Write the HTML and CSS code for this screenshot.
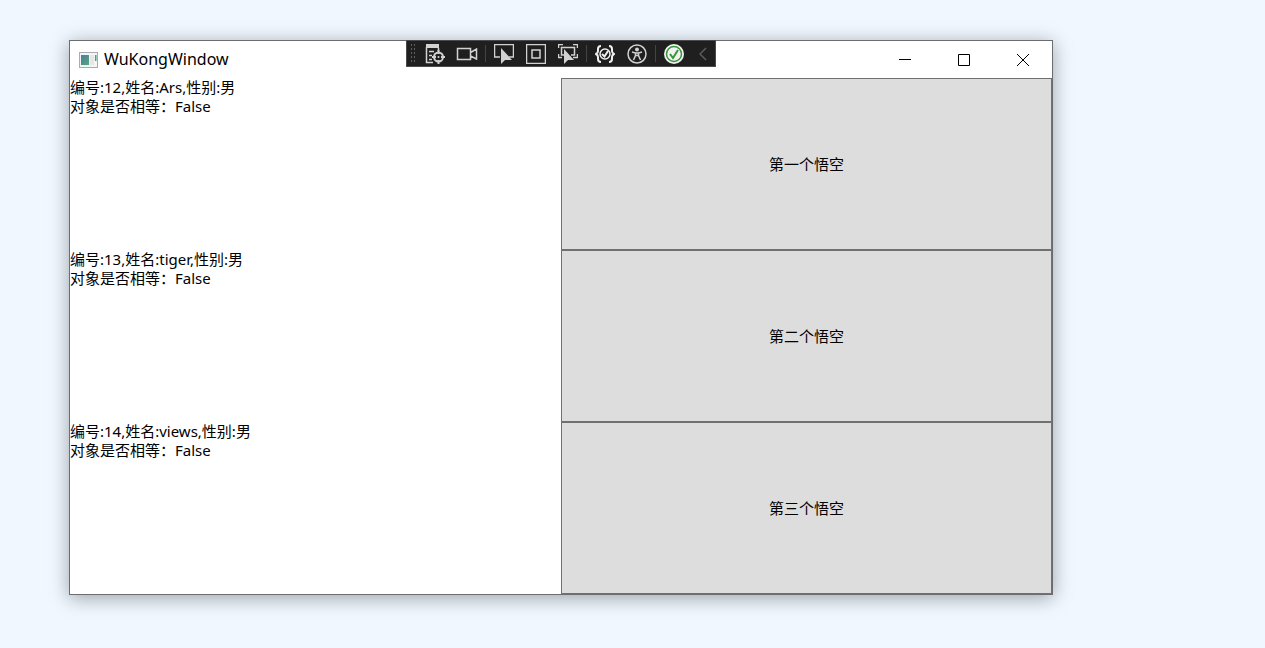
FILE: index.html
```html
<!DOCTYPE html>
<html lang="zh">
<head>
    <meta charset="utf-8">
    <title>WuKongWindow</title>
    <link rel="stylesheet" href="styles.css">
</head>
<body>
    <div class="window">
        <div class="titlebar">
            <svg class="app-icon" width="20" height="16" viewBox="0 0 20 16">
                <defs>
                    <linearGradient id="pane" x1="0" y1="0" x2="1" y2="1">
                        <stop offset="0" stop-color="#4a7da6"/>
                        <stop offset="1" stop-color="#55a877"/>
                    </linearGradient>
                </defs>
                <rect x="0.5" y="0.5" width="18" height="15" fill="#f4f4f4" stroke="#a9adb3"/>
                <rect x="2" y="3" width="8" height="10" fill="url(#pane)"/>
                <rect x="11" y="3" width="4" height="10" fill="#e6e6e6"/>
                <rect x="16" y="3" width="1.5" height="6" fill="#4f9c83"/>
            </svg>
            <h1 class="title">WuKongWindow</h1>
            <button class="win-btn" aria-label="minimize">
                <svg width="12" height="12" viewBox="0 0 12 12"><path d="M0 5.5H12"/></svg>
            </button>
            <button class="win-btn" aria-label="maximize">
                <svg width="12" height="12" viewBox="0 0 12 12"><path d="M.5 .5H11.5V11.5H.5Z"/></svg>
            </button>
            <button class="win-btn" aria-label="close">
                <svg width="12" height="12" viewBox="0 0 12 12"><path d="M0 0L12 12M12 0L0 12"/></svg>
            </button>
        </div>

        <!-- 调试工具栏 -->
        <div class="toolbar">
            <span class="grip"></span>
            <button class="tool" aria-label="live visual tree">
                <svg width="20" height="20" viewBox="0 0 20 20">
                    <path d="M1 0H14V4H1Z" fill="#d2d2d2" stroke="none"/>
                    <path d="M1.5 3V18.500H8M4 7.500H9M4 11.500H7M4 15.500H7M13.500 4V7" stroke-width="1.5"/>
                    <circle cx="13.5" cy="13" r="4.5" stroke-width="2"/>
                    <path d="M13.500 6V10M13.500 16V20M7 13H11M16 13H20" stroke-width="2"/>
                    <circle cx="13.5" cy="13" r="1" fill="#d2d2d2" stroke="none"/>
                </svg>
            </button>
            <button class="tool" aria-label="record">
                <svg width="22" height="20" viewBox="0 0 22 20">
                    <path d="M1.5 4.500H14.500V15.500H1.500ZM14.500 8.500L20.500 5V15L14.500 12" stroke-width="1.5"/>
                </svg>
            </button>
            <span class="sep"></span>
            <button class="tool" aria-label="select element">
                <svg width="20" height="20" viewBox="0 0 20 20">
                    <path d="M6 13H.5V.5H19.5V13H15" stroke-width="1.5"/>
                    <path d="M7 4V20L11 16H18Z" fill="#d2d2d2" stroke="none"/>
                </svg>
            </button>
            <button class="tool" aria-label="layout adorners">
                <svg width="20" height="20" viewBox="0 0 20 20">
                    <path d="M.5 .5H19.5V19.5H.5ZM6 6H14V14H6Z" stroke-width="1.5"/>
                </svg>
            </button>
            <button class="tool" aria-label="track focus">
                <svg width="20" height="20" viewBox="0 0 20 20">
                    <path d="M.5 4V.5H5M15 .5H19.500V4M.5 10V13.500H4M19.500 10V13.500H15" stroke-width="1.5"/>
                    <path d="M6 11H3.500V3.500H16.500V11H13" stroke-width="1.5"/>
                    <path d="M6 5V20L10 16H16Z" fill="#d2d2d2" stroke="none"/>
                </svg>
            </button>
            <span class="sep"></span>
            <button class="tool" aria-label="binding failures">
                <svg class="bright" width="20" height="20" viewBox="0 0 20 20">
                    <path d="M6 2Q3 2 3 5V7Q3 9 1 10Q3 11 3 13V15Q3 18 6 18M14 2Q17 2 17 5V7Q17 9 19 10Q17 11 17 13V15Q17 18 14 18" stroke-width="2"/>
                    <circle cx="10" cy="10" r="5" stroke-width="1.5"/>
                    <path d="M7 10L9.500 12.500L13 7" stroke-width="2"/>
                </svg>
            </button>
            <button class="tool" aria-label="accessibility">
                <svg width="20" height="20" viewBox="0 0 20 20">
                    <circle cx="10" cy="10" r="9" stroke-width="1.5"/>
                    <circle cx="10" cy="5.5" r="2" fill="#d2d2d2" stroke="none"/>
                    <path d="M5 8L8.500 9V11.500L6.500 16M15 8L11.500 9V11.500L13.500 16M8.500 9H11.500M8.500 11.500H11.500" stroke-width="1.5"/>
                </svg>
            </button>
            <span class="sep"></span>
            <button class="tool" aria-label="hot reload">
                <svg width="20" height="20" viewBox="0 0 20 20">
                    <circle cx="10" cy="10" r="10" fill="#f2f2f2" stroke="none"/>
                    <circle cx="10" cy="10" r="7.5" stroke="#389638" stroke-width="1.5"/>
                    <path d="M6 10L9 14L14 6" stroke="#389638" stroke-width="2"/>
                </svg>
            </button>
            <button class="tool collapse" aria-label="collapse">
                <svg width="8" height="14" viewBox="0 0 8 14"><path d="M7 1L1 7L7 13" stroke="#5c5c5c" stroke-width="1.5"/></svg>
            </button>
        </div>

        <div class="content">
            <p class="info">编号:12,姓名:Ars,性别:男<br>对象是否相等：False</p>
            <button class="wukong">第一个悟空</button>
            <p class="info">编号:13,姓名:tiger,性别:男<br>对象是否相等：False</p>
            <button class="wukong">第二个悟空</button>
            <p class="info">编号:14,姓名:views,性别:男<br>对象是否相等：False</p>
            <button class="wukong">第三个悟空</button>
        </div>
    </div>
</body>
</html>
```
FILE: styles.css
```css
* {
    box-sizing: border-box;
}
body {
    display: flex;
    min-height: 100vh;
    margin: 0;
    padding: 40px 212px 53px 69px;
    background-color: #f0f7ff;
    color: #000000;
    font-family: "Noto Sans", "Noto Sans CJK SC", sans-serif;
    font-size: 15px;
    line-height: 19px;
}
button {
    padding: 0;
    border: 0;
    background: none;
    color: inherit;
    font: inherit;
}
svg {
    fill: none;
}
.window {
    position: relative;
    display: flex;
    flex: 1;
    flex-direction: column;
    border: 1px solid #6b6d70;
    background-color: #ffffff;
    box-shadow: 0 3px 18px rgba(0, 0, 0, 0.35);
}
.titlebar {
    display: flex;
    align-items: center;
    height: 37px;
    padding-left: 9px;
}
.title {
    flex: 1;
    margin: 0 0 0 5px;
    font-size: 16px;
    font-weight: normal;
}
.win-btn {
    display: flex;
    align-items: center;
    justify-content: center;
    width: 59px;
    height: 36px;
    stroke: #000000;
}

/* 工具栏浮在标题栏上面 */
.toolbar {
    position: absolute;
    top: -1px;
    right: 0;
    left: 0;
    display: flex;
    align-items: center;
    width: 310px;
    height: 27px;
    margin: 0 auto;
    border: 1px solid #4a4a4a;
    background-color: #1f1f1f;
}
.grip {
    width: 6px;
    height: 21px;
    margin: 0 3px;
    background-image: radial-gradient(#606060 1px, transparent 1px);
    background-size: 3px 4px;
}
.tool {
    display: flex;
    align-items: center;
    justify-content: center;
    width: 32px;
    height: 25px;
    stroke: #d2d2d2;
}
.bright {
    stroke: #f0f0f0;
}
.collapse {
    width: 25px;
}
.sep {
    width: 1px;
    height: 17px;
    margin: 0 2px;
    background-color: #444444;
}

.content {
    display: grid;
    flex: 1;
    grid-template-columns: 1fr 1fr;
    grid-auto-rows: 1fr;
}
.info {
    margin: 0;
}
.wukong {
    border: 1px solid #707070;
    background-color: #dddddd;
}
```
